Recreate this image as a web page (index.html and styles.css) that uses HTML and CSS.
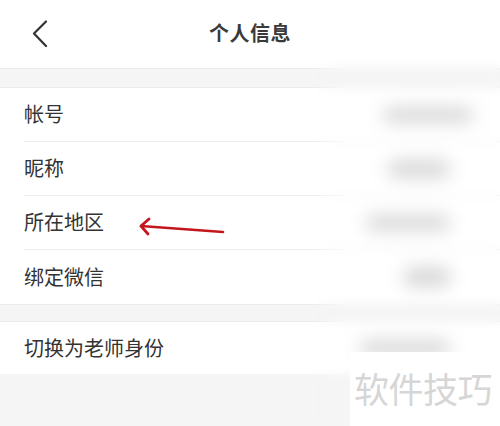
FILE: index.html
```html
<!DOCTYPE html>
<html lang="zh-CN">
<head>
<meta charset="utf-8">
<link rel="stylesheet" href="styles.css">
</head>
<body>
<div class="screen">
  <header class="nav">
    <span class="back">
      <svg width="16" height="28" viewBox="0 0 16 28"><path d="M14 1.5 L2 13.5 L14 26" fill="none" stroke="#333" stroke-width="2.2" stroke-linecap="round" stroke-linejoin="round"/></svg>
    </span>
    <h1 class="title">个人信息</h1>
    <span></span>
  </header>
  <div class="spacer s1"></div>
  <section class="group">
    <div class="row"><div class="row-inner"><span class="label">帐号</span><span class="val v1"></span></div></div>
    <div class="row"><div class="row-inner"><span class="label">昵称</span><span class="val v2"></span></div></div>
    <div class="row"><div class="row-inner"><span class="label">所在地区</span><span class="val v3"></span></div></div>
    <div class="row"><div class="row-inner"><span class="label">绑定微信</span><span class="val v4"></span></div></div>
  </section>
  <div class="spacer s2"></div>
  <section class="group">
    <div class="row tall"><div class="row-inner"><span class="label">切换为老师身份</span><span class="val v5"></span></div></div>
  </section>
  <div class="blur-overlay"></div>
  <svg class="arrow" width="100" height="30" viewBox="0 0 100 30">
    <path d="M21 9 L103 15" stroke="#c4161c" stroke-width="2.6" fill="none" stroke-linecap="round"/>
    <path d="M29 2 L21 9 L28 17" stroke="#c4161c" stroke-width="2.8" fill="none" stroke-linecap="round" stroke-linejoin="round"/>
  </svg>
  <div class="watermark">软件技巧</div>
</div>
</body>
</html>
```
FILE: styles.css
```css
html, body {
  margin: 0;
  padding: 0;
}
body {
  background: #f5f5f5;
  font-family: "Noto Sans CJK SC", "Noto Sans", sans-serif;
  color: #333;
}
.screen {
  position: relative;
  width: 500px;
  height: 426px;
  overflow: hidden;
  background: #f5f5f5;
}
.nav {
  height: 68px;
  background: #fff;
  border-bottom: 1px solid #ececec;
  display: grid;
  grid-template-columns: 1fr auto 1fr;
  align-items: center;
}
.back {
  padding-left: 32px;
  display: flex;
  align-items: center;
  height: 28px;
  margin-top: -1px;
}
.title {
  margin: 0;
  font-size: 20px;
  font-weight: 700;
  color: #3a3a3a;
  letter-spacing: 0.5px;
  line-height: 1;
  margin-top: -2px;
}
.spacer.s1 { height: 18px; border-bottom: 1px solid #ececec; }
.spacer.s2 { height: 16px; border-top: 1px solid #ececec; border-bottom: 1px solid #ececec; }
.group {
  background: #fff;
}
.row {
  padding-left: 24px;
}
.row-inner {
  height: 53px;
  display: flex;
  align-items: center;
  justify-content: space-between;
  border-bottom: 1px solid #ededed;
}
.row:last-child .row-inner {
  border-bottom: none;
  height: 54px;
}
.row.tall .row-inner { height: 52px; }
.label {
  font-size: 20px;
  line-height: 1;
  color: #333;
  margin-top: -1px;
}
.val {
  display: block;
  height: 14px;
  background: #d2d2d2;
  border-radius: 8px;
  filter: blur(8px);
}
.v1 { width: 90px; margin-right: 27px; }
.v2 { width: 62px; margin-right: 50px; height: 16px; }
.v3 { width: 84px; margin-right: 50px; }
.v4 { width: 46px; margin-right: 50px; height: 18px; }
.v5 { width: 90px; margin-right: 50px; }
.blur-overlay {
  position: absolute;
  top: 0;
  right: 0;
  width: 190px;
  height: 100%;
  backdrop-filter: blur(5px);
  -webkit-mask-image: linear-gradient(to right, transparent 0, #000 40px);
  mask-image: linear-gradient(to right, transparent 0, #000 40px);
}
.arrow {
  position: absolute;
  left: 120px;
  top: 217px;
  overflow: visible;
}
.watermark {
  position: absolute;
  left: 350px;
  top: 352px;
  width: 150px;
  height: 74px;
  background: #fff;
  color: #d6d6d6;
  font-size: 35px;
  line-height: 1;
  padding: 18px 0 0 4px;
  box-sizing: border-box;
  white-space: nowrap;
  letter-spacing: -0.5px;
}
```
